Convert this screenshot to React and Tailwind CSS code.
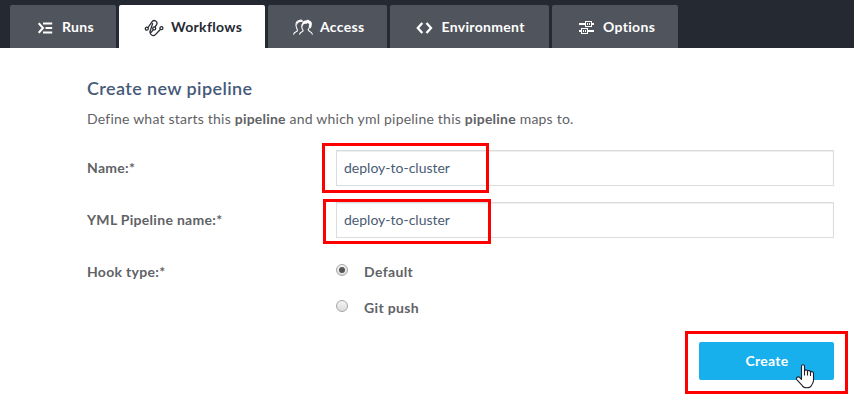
import React from "react";

function RunsIcon() {
  return (
    <svg width="15" height="12" viewBox="0 0 15 12" fill="none" stroke="currentColor" strokeWidth="2">
      <path d="M0.7 1.2L5 6L0.7 10.8M5 1.5H14.2M7.5 6H14.2M5 10.5H14.2" />
    </svg>
  );
}

function WorkflowsIcon() {
  return (
    <svg width="20" height="18" viewBox="0 0 20 18" fill="none" stroke="currentColor" strokeWidth="1.3" strokeLinecap="round">
      <circle cx="2.8" cy="9.7" r="1.5" />
      <circle cx="17.4" cy="9.2" r="1.5" />
      <circle cx="10.2" cy="9.4" r="1.5" />
      <path d="M4 8.5L8 2.8C10 .1 14.2 2.4 12.6 5.6L11.1 7.9M9.3 10.8L7.3 13.2M8.6 4.6L6.6 10.8C4.6 14.2 8.6 18.6 11.4 15.6L16.3 10.5" />
    </svg>
  );
}

function AccessIcon() {
  return (
    <svg width="20" height="17" viewBox="0 0 20 17" fill="none" stroke="currentColor" strokeWidth="1.1" strokeLinecap="round">
      <path d="M0.7 15.2C0.8 13 3.5 12.8 4.4 11.8C4.8 10.7 3.3 9.3 3.1 7C2.6 3.7 4 1.6 6.4 1.5C7.4 0.9 8.8 1.2 9.4 2.1M9.2 5.2C8.2 8 8.8 9.6 10 11C10.9 12.8 7.2 12.4 6.6 15.2M15.5 10.6C14.8 12.6 18.8 12.1 19.3 15.2M16.4 6.3C16.7 8.4 16 9.7 15.2 10.7" />
      <path fill="currentColor" stroke="none" d="M9.2 6C8.7 2.6 11.2 1.2 13 1.4C14.1 .4 16 .8 16.7 1.7C18.9 2.2 19.3 5 18.6 6.8C18.5 8.2 17.6 9.4 16.7 9.8C17.1 7.5 16.8 5.3 14.8 4.1C13.5 5.4 11.3 4.6 10.3 5.5L9.8 8Z" />
      <path fill="currentColor" stroke="none" d="M3.2 6C3.4 3.3 5 1.4 7 1.7L9.2 2L8.7 3.1C6.8 2.7 5 3.2 4.1 5.6Z" />
    </svg>
  );
}

function EnvironmentIcon() {
  return (
    <svg width="17" height="12" viewBox="0 0 17 12" fill="none" stroke="currentColor" strokeWidth="2.3">
      <path d="M6.3 1L1.8 6L6.3 11M10.5 1L15 6L10.5 11" />
    </svg>
  );
}

function OptionsIcon() {
  return (
    <svg width="15" height="13" viewBox="0 0 15 13" fill="none" stroke="currentColor" shapeRendering="crispEdges">
      <path strokeWidth="2" d="M0 3H6M13 3H15M0 10H2M9 10H15" />
      <path strokeWidth="1" d="M6.5 0.5H12.5V5.5H6.5ZM8.5 2V4M10.5 2V4M2.5 7.5H8.5V12.5H2.5ZM4.5 9V11M6.5 9V11" />
    </svg>
  );
}

function Tab({ icon, label, active, className }) {
  return (
    <div
      className={`flex h-[43px] items-center rounded-t-[2px] pt-[2px] text-[14px] leading-5 font-bold tracking-[0.32px] ${
        active ? "bg-white text-[#252932]" : "bg-[#50545c] text-white"
      } ${className}`}
    >
      {icon}
      <span className="mb-[2px] whitespace-nowrap">{label}</span>
    </div>
  );
}

function Field({ label, value, highlight }) {
  return (
    <div className="flex h-9 items-center">
      <label className="mb-[2px] w-[249px] text-[14px] font-bold tracking-[0.3px]">{label}</label>
      <div className="relative flex-1">
        <input
          className="block h-9 w-full border border-[#d9dedd] px-[7px] pb-[2px] text-[14px] text-[#4a5b75] shadow-[inset_0_1px_1px_#eeeeee] outline-none"
          defaultValue={value}
        />
        <div className={`pointer-events-none absolute border-3 border-[#ff0000] ${highlight}`} />
      </div>
    </div>
  );
}

function Radio({ label, checked }) {
  return (
    <label className="flex h-5 items-center text-[14px] font-bold tracking-[0.35px]">
      <span className="mr-4 -mt-1 flex size-3 items-center justify-center rounded-full border border-[#a5a5a5] bg-linear-to-b from-[#f4f4f4] to-[#dcdcdc]">
        {checked && <span className="size-1.5 rounded-full bg-[#555555]" />}
      </span>
      <span className="mb-[2px]">{label}</span>
    </label>
  );
}

function HandCursor() {
  return (
    <svg className="absolute top-[22px] left-[97px]" width="19" height="25" viewBox="0 0 19 25" fill="#fff" stroke="#20202c" strokeWidth="1.1" strokeLinejoin="round">
      <path d="M5.5 15.5V2.3C5.5 .2 8.5 .2 8.5 2.3V7C9 5.4 11.5 5.6 11.5 7.4C12.2 6 14.5 6.4 14.5 8.2C15.4 7.2 17.5 7.7 17.5 9.5V16.5C17.5 19 16 20 15.5 21.5C14 24.5 7.5 24.5 6.3 21.7L1 15.8C-.5 13.7 2 12 3.6 13.4Z" />
      <path fill="none" d="M8.5 6.5V11.5M11.5 7V11.5M14.5 8V12" />
    </svg>
  );
}

export default function App() {
  return (
    <div className="h-[403px] w-[854px] overflow-hidden bg-white font-['Lato',sans-serif] text-[#5f6266]">
      <nav className="flex h-12 gap-[3px] bg-[#252932] pt-[5px] pl-[10px]">
        <Tab icon={<RunsIcon />} label="Runs" className="w-[106px] gap-[9px] pl-7" />
        <Tab icon={<WorkflowsIcon />} label="Workflows" active className="w-[146px] gap-[7px] pl-[25px]" />
        <Tab icon={<AccessIcon />} label="Access" className="w-[119px] gap-[7px] pl-[25px]" />
        <Tab icon={<EnvironmentIcon />} label="Environment" className="w-[159px] gap-[8.5px] pl-[26px]" />
        <Tab icon={<OptionsIcon />} label="Options" className="w-[126px] gap-[9px] pl-[27px]" />
      </nav>
      <main className="pt-[28px] pr-5 pl-[87px]">
        <h1 className="text-[18px] leading-6 font-semibold tracking-[0.39px] text-[#465a78]">Create new pipeline</h1>
        <p className="mt-[9px] text-[14px] leading-5 tracking-[0.215px]">
          Define what starts this <b>pipeline</b> and which yml pipeline this <b>pipeline</b> maps to.
        </p>
        <form className="mt-[21px] flex flex-col gap-4">
          <Field label="Name:*" value="deploy-to-cluster" highlight="-top-[7px] -left-[14px] h-[50px] w-[167px]" />
          <Field label="YML Pipeline name:*" value="deploy-to-cluster" highlight="-top-[3px] -left-[13px] h-[45px] w-[168px]" />
          <div className="flex pt-2">
            <span className="w-[249px] text-[14px] leading-5 font-bold tracking-[0.3px]">Hook type:*</span>
            <div className="flex flex-col gap-4">
              <Radio label="Default" checked />
              <Radio label="Git push" />
            </div>
          </div>
        </form>
        <div className="mt-6 flex justify-end">
          <div className="relative">
            <button className="block h-[38px] w-[135px] rounded-[2px] bg-[#17afec] pb-[2px] pl-px text-[14px] font-bold tracking-[0.25px] text-white">Create</button>
            <div className="pointer-events-none absolute -top-[11px] -left-[14px] h-[63px] w-[163px] border-3 border-[#ff0000]" />
            <HandCursor />
          </div>
        </div>
      </main>
    </div>
  );
}
